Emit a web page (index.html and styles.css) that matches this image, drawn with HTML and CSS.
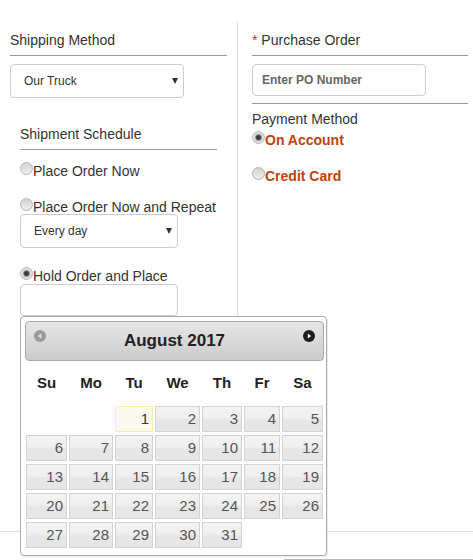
FILE: index.html
```
<!DOCTYPE html>
<html lang="en">
<head>
  <meta charset="UTF-8" />
  <title>Checkout Options</title>
  <link rel="stylesheet" href="styles.css">
</head>
<body>
  <div class="form">
    <div class="col col-left">
      <div class="heading">Shipping Method</div>
      <div class="select-wrap wide">
        <select class="select">
          <option>Our Truck</option>
        </select>
      </div>

      <div class="schedule">
        <div class="heading">Shipment Schedule</div>
        <label class="radio-row first"><input type="radio" name="sched" class="radio">Place Order Now</label>
        <label class="radio-row"><input type="radio" name="sched" class="radio">Place Order Now and Repeat</label>
        <div class="select-wrap narrow">
          <select class="select">
            <option>Every day</option>
          </select>
        </div>
        <label class="radio-row hold"><input type="radio" name="sched" class="radio" checked>Hold Order and Place</label>
        <div class="date-wrap">
          <input type="text" class="text-input date-input">

          <div class="calendar">
            <div class="cal-header">
              <svg class="cal-nav" width="12" height="12" viewBox="0 0 12 12">
                <circle cx="6" cy="6" r="6" fill="#9a9a9a"/>
                <path d="M7.3 3.4 L4 6 L7.3 8.6 Z" fill="#e4e4e4"/>
              </svg>
              <div class="cal-title">August 2017</div>
              <svg class="cal-nav" width="12" height="12" viewBox="0 0 12 12">
                <circle cx="6" cy="6" r="6" fill="#1e1e1e"/>
                <path d="M4.8 3.4 L8.1 6 L4.8 8.6 Z" fill="#fff"/>
              </svg>
            </div>
            <div class="cal-grid dow">
              <span>Su</span><span>Mo</span><span>Tu</span><span>We</span><span>Th</span><span>Fr</span><span>Sa</span>
            </div>
            <div class="cal-grid days" id="days"></div>
          </div>
        </div>
      </div>
    </div>

    <div class="col col-right">
      <div class="heading"><span class="req">*</span> Purchase Order</div>
      <div class="po-block">
        <input type="text" class="text-input po-input" placeholder="Enter PO Number">
      </div>
      <div class="pay-title">Payment Method</div>
      <label class="radio-row pay first"><input type="radio" name="pay" class="radio" checked>On Account</label>
      <label class="radio-row pay"><input type="radio" name="pay" class="radio">Credit Card</label>
    </div>
  </div>
  <div class="footer"></div>

  <script>
    var days = document.getElementById("days");
    var html = "";
    // August 2017 starts on a Tuesday
    for (var i = 0; i < 2; i++) html += '<span class="blank"></span>';
    for (var d = 1; d <= 31; d++) {
      html += '<a class="day' + (d === 1 ? ' today' : '') + '">' + d + '</a>';
    }
    days.innerHTML = html;
  </script>
</body>
</html>
```

FILE: styles.css
```
body {
  margin: 0;
  font-family: "Liberation Sans", Arial, sans-serif;
  font-size: 14px;
  line-height: 16px;
  color: #333;
  background: #fff;
}
.form {
  display: flex;
  margin-top: 22px;
  height: 510px;
  box-sizing: border-box;
  border-bottom: 1px solid #ddd;
}
.col-left {
  width: 237px;
  box-sizing: border-box;
  padding: 10px 10px 0;
}
.col-right {
  flex: 1;
  border-left: 1px solid #ddd;
  padding: 10px 5px 0 14px;
}
.heading {
  padding-bottom: 7px;
  border-bottom: 1px solid #999;
}
.req {
  color: #e2312d;
}
.select-wrap {
  position: relative;
  margin-top: 8px;
}
.select-wrap.wide { width: 174px; }
.select-wrap.narrow { width: 158px; margin-top: 0; }
.select-wrap::after {
  content: "";
  position: absolute;
  right: 6px;
  top: 14px;
  border-left: 3.5px solid transparent;
  border-right: 3.5px solid transparent;
  border-top: 6px solid #333;
}
.select {
  -webkit-appearance: none;
  appearance: none;
  display: block;
  width: 100%;
  height: 34px;
  margin: 0;
  padding: 0 0 0 13px;
  border: 1px solid #ccc;
  border-radius: 4px;
  background: #fff;
  font-family: inherit;
  font-size: 12px;
  color: #333;
}
.schedule {
  margin: 28px 10px 0;
}
.radio-row {
  display: block;
  height: 16px;
  margin-top: 20px;
}
.radio-row.first { margin-top: 12px; }
.radio-row.hold { margin-top: 19px; }
.radio {
  -webkit-appearance: none;
  appearance: none;
  width: 13px;
  height: 13px;
  margin: 0 0 1px 0;
  vertical-align: baseline;
  border: 1px solid #b4b4b4;
  border-radius: 50%;
  box-sizing: border-box;
  background: linear-gradient(#d2d2d2, #eeeeee);
}
.radio:checked {
  background: radial-gradient(circle, #3c3c3c 0, #3c3c3c 2px, #9a9a9a 3px, #dcdcdc 4px, #ececec 100%);
}
.text-input {
  display: block;
  box-sizing: border-box;
  height: 32px;
  margin: 0;
  border: 1px solid #ccc;
  border-radius: 4px;
  background: #fff;
  font-family: inherit;
  font-size: 12px;
  color: #333;
}
.date-wrap {
  position: relative;
  width: 158px;
  margin-top: 1px;
}
.date-input { width: 158px; }

/* datepicker popup */
.calendar {
  position: absolute;
  top: 100%;
  left: 0;
  width: 307px;
  height: 240px;
  box-sizing: border-box;
  padding: 4px 2px 0 4px;
  border: 1px solid #aaa;
  border-radius: 4px;
  background: #fff;
  box-shadow: 1px 1px 1px rgba(0, 0, 0, 0.08);
  z-index: 2;
}
.cal-header {
  display: flex;
  height: 40px;
  box-sizing: border-box;
  padding: 0 8px;
  border: 1px solid #aaa;
  border-radius: 4px;
  background: linear-gradient(#e6e6e6, #cbcbcb);
}
.cal-nav {
  margin-top: 8px;
  flex: none;
}
.cal-title {
  flex: 1;
  text-align: center;
  font-weight: bold;
  font-size: 17px;
  line-height: 38px;
  color: #222;
}
.cal-grid {
  display: grid;
  grid-template-columns: 41px 44px 38px 45px 40px 36px 41px;
  column-gap: 2px;
  margin-left: 1px;
}
.dow {
  height: 44px;
  align-items: center;
  font-weight: bold;
  font-size: 15px;
  color: #222;
}
.dow span { text-align: center; }
.days {
  grid-auto-rows: 26px;
  row-gap: 3px;
  margin-top: 1px;
}
.day {
  box-sizing: border-box;
  padding-right: 3px;
  border: 1px solid #d3d3d3;
  background: linear-gradient(#f3f3f3 0%, #efefef 45%, #e6e6e6 55%, #e6e6e6 100%);
  text-align: right;
  font-size: 15px;
  line-height: 24px;
  color: #555;
}
.day.today {
  border-color: #fcefa1;
  background: #fbf9ee;
  color: #363636;
}

.po-block {
  padding: 8px 0 7px;
  border-bottom: 1px solid #999;
}
.po-input {
  width: 174px;
  padding-left: 9px;
}
.po-input::placeholder {
  color: #666;
  font-weight: bold;
}
.pay-title {
  margin-top: 7px;
}
.radio-row.pay {
  margin-top: 20px;
  font-weight: bold;
  color: #c2410c;
}
.radio-row.pay.first { margin-top: 4px; }
.footer {
  margin: 27px 0 0 284px;
  border-top: 1px solid #bbb;
}
```
